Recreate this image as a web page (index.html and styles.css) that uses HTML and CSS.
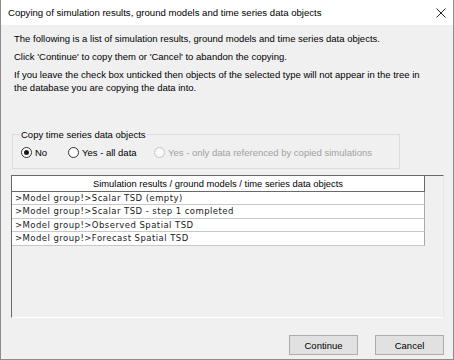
FILE: index.html
```html
<!DOCTYPE html>
<html lang="en">
<head>
  <meta charset="UTF-8">
  <title>Copying of simulation results</title>
  <link rel="stylesheet" href="styles.css">
</head>
<body>
  <div class="window">
    <!-- Title bar -->
    <div class="titlebar">
      <span class="title">Copying of simulation results, ground models and time series data objects</span>
      <svg class="close" viewBox="0 0 10 10" xmlns="http://www.w3.org/2000/svg">
        <path d="M0.5,0.5 L9.5,9.5 M9.5,0.5 L0.5,9.5"/>
      </svg>
    </div>

    <div class="content">
      <p class="intro">The following is a list of simulation results, ground models and time series data objects.</p>
      <p class="intro">Click 'Continue' to copy them or 'Cancel' to abandon the copying.</p>
      <p class="intro">If you leave the check box unticked then objects of the selected type will not appear in the tree in the database you are copying the data into.</p>

      <!-- Copy options -->
      <fieldset class="group">
        <legend>Copy time series data objects</legend>
        <label class="radio no checked"><span class="dot"></span>No</label>
        <label class="radio all"><span class="dot"></span>Yes - all data</label>
        <label class="radio referenced disabled"><span class="dot"></span>Yes - only data referenced by copied simulations</label>
      </fieldset>

      <!-- Object list -->
      <div class="grid">
        <div class="grid-header">Simulation results / ground models / time series data objects</div>
        <div class="grid-row">&gt;Model group!&gt;Scalar TSD (empty)</div>
        <div class="grid-row">&gt;Model group!&gt;Scalar TSD - step 1 completed</div>
        <div class="grid-row">&gt;Model group!&gt;Observed Spatial TSD</div>
        <div class="grid-row">&gt;Model group!&gt;Forecast Spatial TSD</div>
      </div>

      <div class="buttons">
        <button class="btn">Continue</button>
        <button class="btn">Cancel</button>
      </div>
    </div>
  </div>
</body>
</html>
```

FILE: styles.css
```css
/* Windows dialog look */
:root {
  --face: #f0f0f0;
  --text: #000000;
  --frame: #8c8c8c;
  --group-line: #dcdcdc;
  --dark-line: #696969;
  --row-line: #c8c8c8;
}
* {
  margin: 0;
  padding: 0;
  box-sizing: border-box;
}
body {
  font-family: "Liberation Sans", Arial, sans-serif;
  font-size: 9.5px;
  color: var(--text);
  background: #ffffff;
}
.window {
  width: 454px;
  height: 360px;
  display: flex;
  flex-direction: column;
  border: 1px solid var(--frame);
  border-top: none;
  background: var(--face);
}

/* Title bar */
.titlebar {
  height: 25px;
  flex: none;
  display: flex;
  align-items: center;
  justify-content: space-between;
  padding: 0 7px 0 7px;
  background: #ffffff;
  font-size: 9.6px;
}
.close {
  width: 10px;
  height: 10px;
  stroke: #222222;
  stroke-width: 1;
  fill: none;
}

/* Dialog body */
.content {
  flex: 1;
  display: flex;
  flex-direction: column;
  padding: 7px 9px 3px 10px;
}
.intro {
  line-height: 13px;
  margin: 0 0 5px 3px;
  padding-right: 10px;
}

/* Group box */
.group {
  width: 388px;
  height: 41px;
  margin: 29px 0 0 1px;
  border: 1px solid var(--group-line);
  padding: 5px 0 0 8px;
  display: flex;
  align-items: center;
}
.group legend {
  padding: 0 1px;
  margin-left: -1px;
  line-height: 13px;
}
.radio {
  display: flex;
  align-items: center;
  line-height: 13px;
}
.radio .dot {
  width: 11px;
  height: 11px;
  border: 1px solid #333333;
  border-radius: 50%;
  background: #ffffff;
  margin-right: 3px;
  position: relative;
}
.radio.checked .dot::after {
  content: '';
  position: absolute;
  left: 2px;
  top: 2px;
  width: 5px;
  height: 5px;
  border-radius: 50%;
  background: #1a1a1a;
}
.radio.no {
  width: 47px;
}
.radio.all {
  width: 86px;
}
.radio.disabled {
  color: #a0a0a0;
}
.radio.disabled .dot {
  border-color: #c4c4c4;
  background: #f8f8f8;
}

/* List grid */
.grid {
  height: 143px;
  width: 433px;
  margin-top: 6px;
  border-top: 1px solid var(--dark-line);
  border-left: 1px solid var(--dark-line);
  border-right: 1px solid #e6e6e6;
  border-bottom: 1px solid #ffffff;
  background: var(--face);
  font-family: "DejaVu Sans", Tahoma, sans-serif;
  font-size: 8.5px;
  letter-spacing: 0.45px;
}
.grid-header {
  width: 413px;
  height: 16px;
  line-height: 15px;
  text-align: center;
  background: #ffffff;
  border-right: 1px solid var(--dark-line);
  border-bottom: 1px solid var(--dark-line);
  font-family: "Liberation Sans", Arial, sans-serif;
  font-size: 9.4px;
  letter-spacing: 0;
}
.grid-row {
  width: 413px;
  height: 13.4px;
  line-height: 12.4px;
  padding-left: 3px;
  background: #ffffff;
  color: #1a1a1a;
  border-right: 1px solid #a8a8a8;
  border-bottom: 1px solid var(--row-line);
  white-space: nowrap;
}

/* Buttons */
.buttons {
  margin-top: 17px;
  display: flex;
  justify-content: flex-end;
  gap: 17px;
}
.btn {
  width: 69px;
  height: 20px;
  background: #e1e1e1;
  border: 1px solid #adadad;
  font-family: "Liberation Sans", Arial, sans-serif;
  font-size: 9.5px;
  color: var(--text);
}
```
